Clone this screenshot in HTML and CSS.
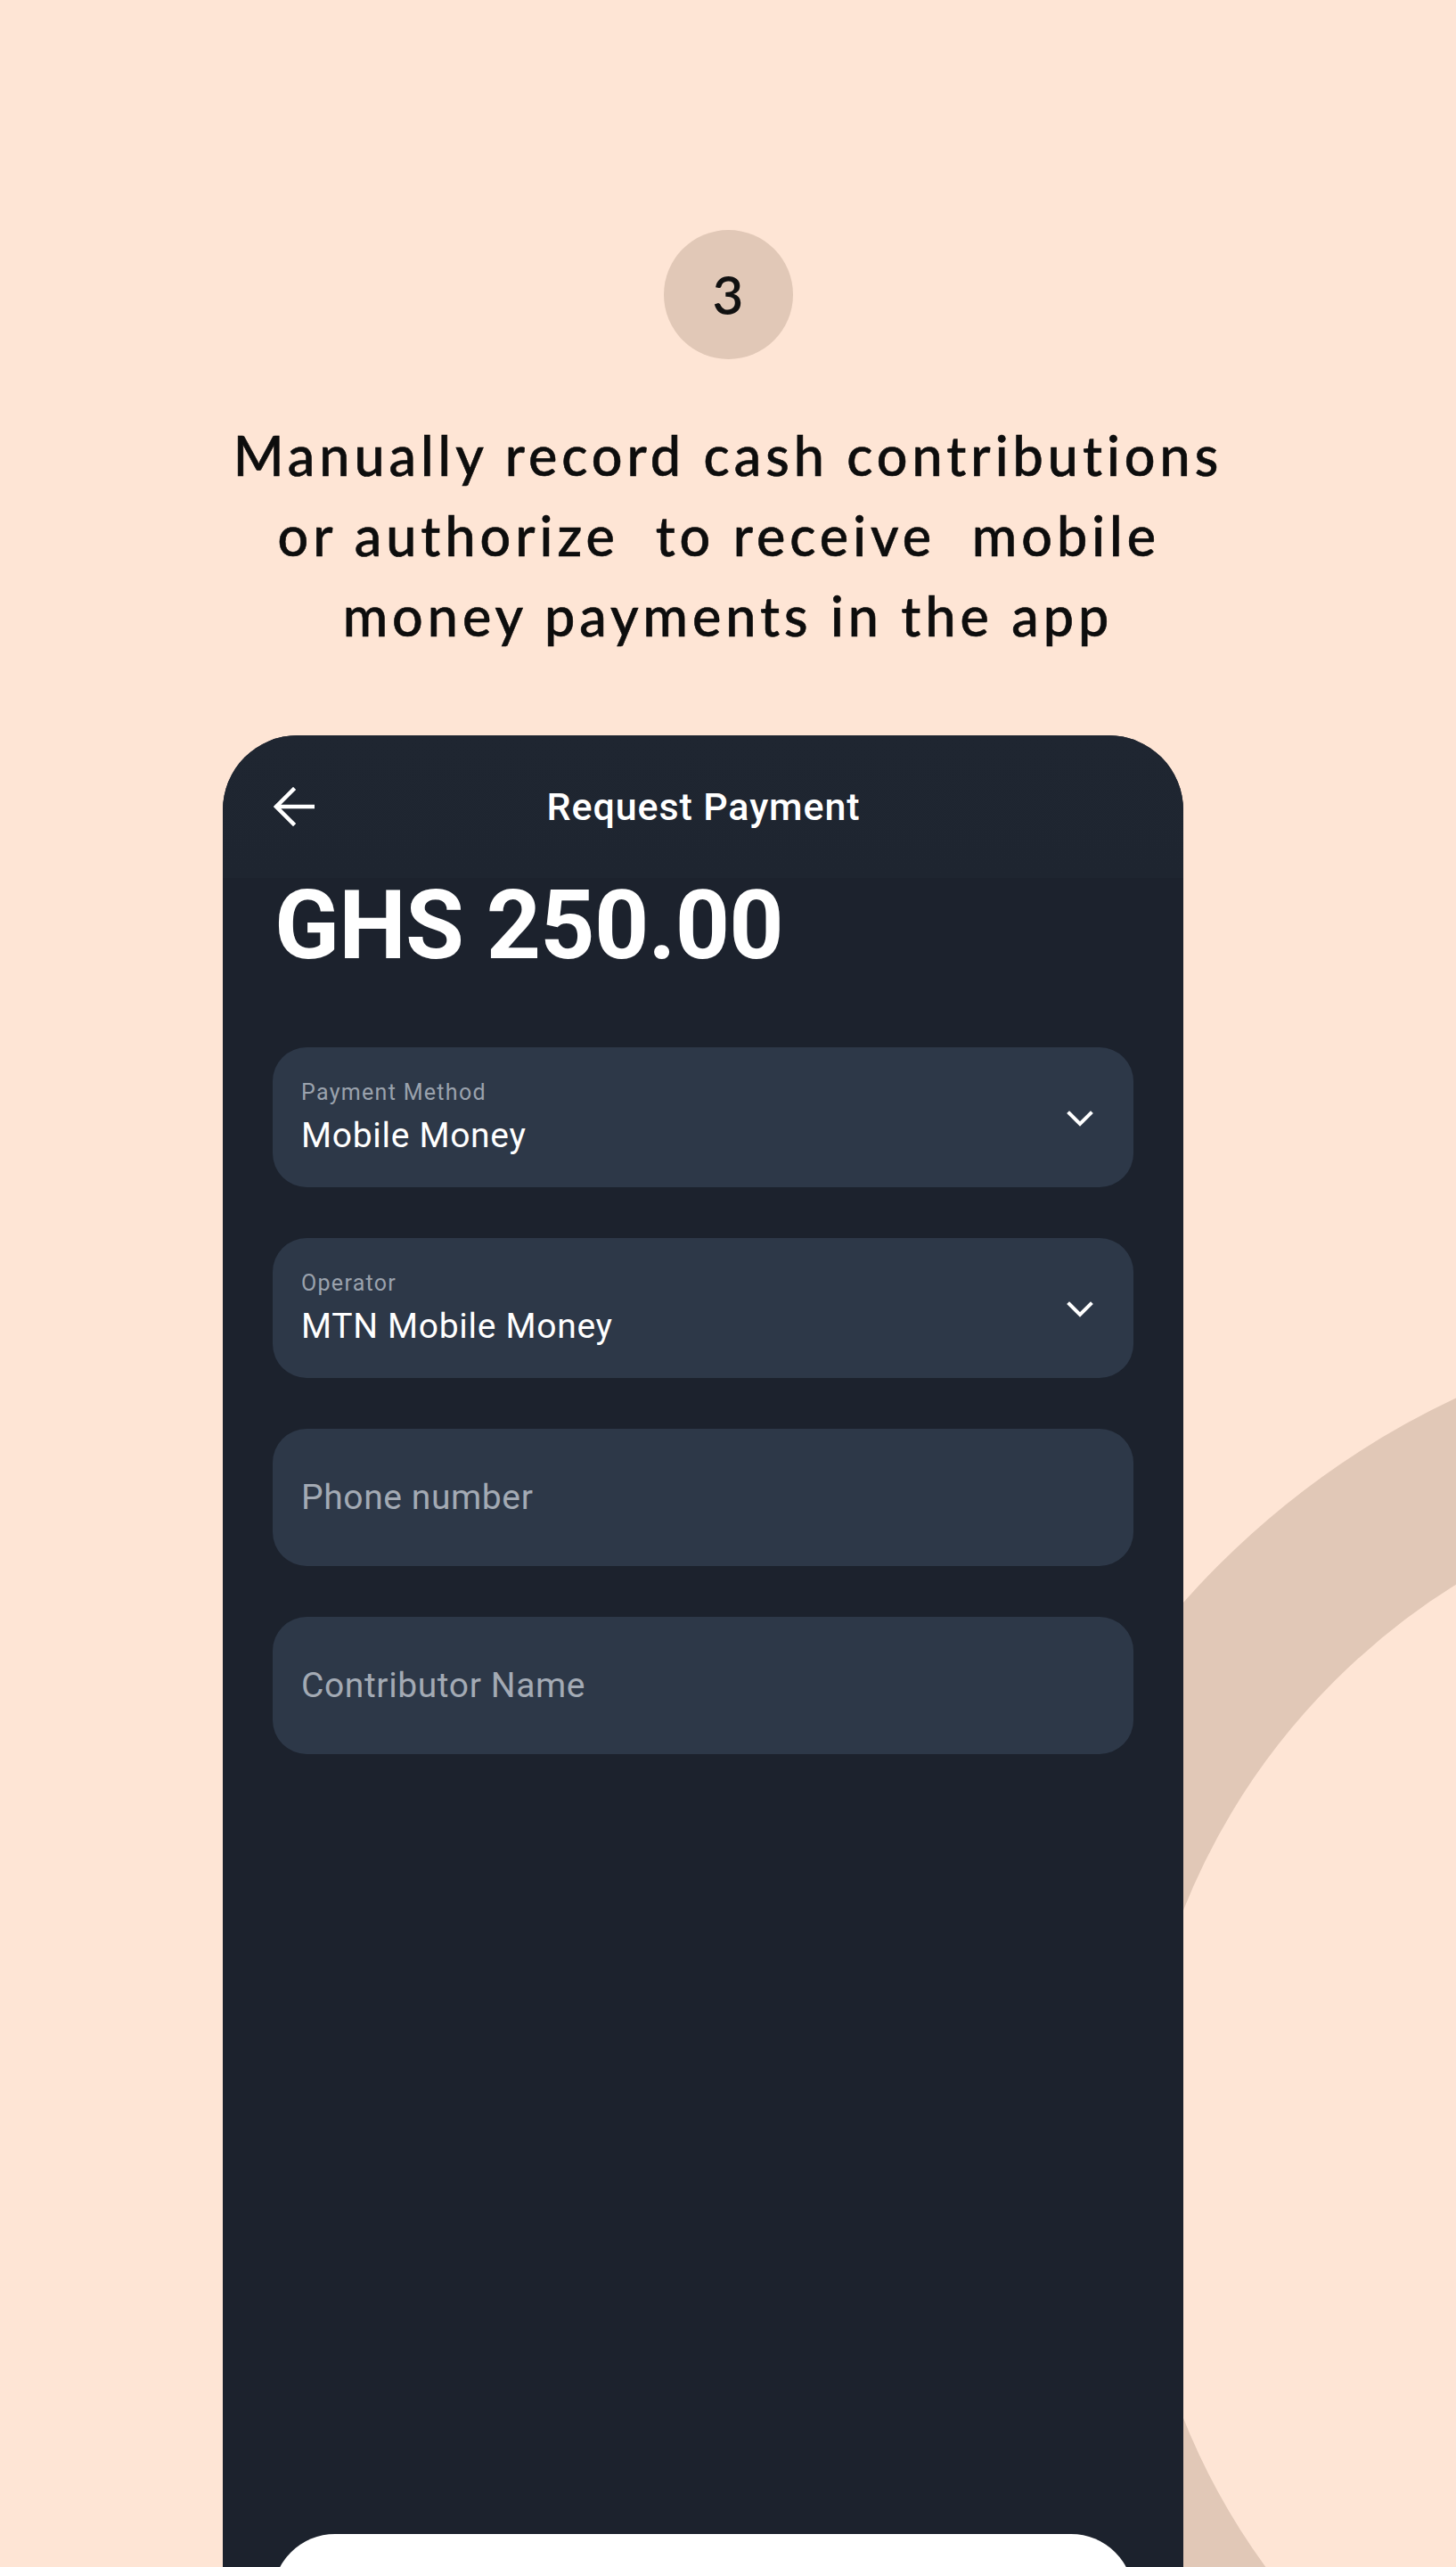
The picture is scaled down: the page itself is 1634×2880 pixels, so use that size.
FILE: index.html
```html
<!DOCTYPE html>
<html lang="en">
<head>
<meta charset="utf-8">
<title>Request Payment</title>
<link rel="stylesheet" href="styles.css">
</head>
<body>
<div class="ring" aria-hidden="true"></div>
<main class="page">
  <div class="step">3</div>
  <h1 class="headline">Manually record cash contributions<br>or authorize&nbsp; to receive&nbsp; mobile&nbsp;<br>money payments in the app</h1>

  <section class="phone">
    <header class="bar">
      <svg class="back" width="46" height="44" viewBox="0 0 46 44" aria-hidden="true">
        <path d="M44 22H4M22 3L3 22L22 41" fill="none" stroke="#ffffff" stroke-width="4.5" stroke-linecap="square" stroke-linejoin="miter"/>
      </svg>
      <div class="bar-title">Request Payment</div>
      <span class="bar-spacer"></span>
    </header>

    <div class="amount">GHS 250.00</div>

    <div class="fields">
      <div class="field select">
        <div class="field-text">
          <div class="field-label">Payment Method</div>
          <div class="field-value">Mobile Money</div>
        </div>
        <svg class="chev" width="30" height="18" viewBox="0 0 30 18" aria-hidden="true">
          <path d="M3 3L15 15L27 3" fill="none" stroke="#ffffff" stroke-width="4" stroke-linecap="square"/>
        </svg>
      </div>
      <div class="field select">
        <div class="field-text">
          <div class="field-label">Operator</div>
          <div class="field-value">MTN Mobile Money</div>
        </div>
        <svg class="chev" width="30" height="18" viewBox="0 0 30 18" aria-hidden="true">
          <path d="M3 3L15 15L27 3" fill="none" stroke="#ffffff" stroke-width="4" stroke-linecap="square"/>
        </svg>
      </div>
      <div class="field input">
        <span class="placeholder">Phone number</span>
      </div>
      <div class="field input">
        <span class="placeholder">Contributor Name</span>
      </div>
    </div>

    <div class="cta" role="button" aria-label="Continue"></div>
  </section>
</main>
</body>
</html>
```

FILE: styles.css
```css
* { box-sizing: border-box; }

html, body {
  margin: 0;
  padding: 0;
}

body {
  background: #fee5d5;
  height: 2880px;
  overflow: hidden;
  position: relative;
  font-family: "Lato", "Noto Sans", sans-serif;
}

.ring {
  position: absolute;
  left: 1089px;
  top: 1478px;
  width: 1900px;
  height: 1900px;
  border-radius: 50%;
  border: 184px solid #e1c8b7;
  z-index: 0;
}

.page {
  position: relative;
  z-index: 1;
  display: flex;
  flex-direction: column;
  align-items: center;
  padding-top: 258px;
}

.step {
  width: 145px;
  height: 145px;
  border-radius: 50%;
  background: #e1c8b7;
  color: #111111;
  display: flex;
  align-items: center;
  justify-content: center;
  font-size: 60px;
  font-weight: 600;
  line-height: 1;
  padding-bottom: 2px;
}

.headline {
  margin: 63px 0 0;
  font-size: 61px;
  font-weight: 500;
  line-height: 90px;
  text-align: center;
  color: #0d0d0d;
  letter-spacing: 5px;
  -webkit-text-stroke: 0.6px #0d0d0d;
}

.phone {
  align-self: flex-start;
  margin-left: 250px;
  margin-top: 89px;
  width: 1078px;
  background: #1c222d;
  border-radius: 84px 84px 0 0;
  overflow: hidden;
  font-family: "Roboto", "Noto Sans", sans-serif;
  color: #ffffff;
  padding-bottom: 200px;
}

.bar {
  height: 160px;
  background: linear-gradient(#1f2631, #1e2530);
  display: flex;
  align-items: center;
  justify-content: space-between;
  padding: 0 56px 0 57px;
}

.back { display: block; }

.bar-title {
  font-size: 43px;
  font-weight: 500;
  letter-spacing: 0.9px;
}

.bar-spacer { width: 46px; }

.amount {
  padding: 0 56px 0 58px;
  font-size: 107px;
  font-weight: 700;
  line-height: 107px;
  letter-spacing: -0.8px;
}

.fields {
  margin: 83px 56px 0;
  display: flex;
  flex-direction: column;
  gap: 57px;
}

.field {
  background: #2d3848;
  border-radius: 38px;
  display: flex;
  align-items: center;
  padding: 0 45px 0 32px;
}

.field.select {
  height: 157px;
  align-items: flex-start;
  justify-content: space-between;
}

.field.input {
  height: 154px;
}

.field-text {
  padding-top: 36px;
}

.field-label {
  font-size: 25px;
  line-height: 30px;
  color: #9aa2ad;
  letter-spacing: 1.3px;
}

.field-value {
  margin-top: 10px;
  font-size: 39px;
  line-height: 46px;
  color: #ffffff;
  letter-spacing: 0.7px;
}

.chev {
  display: block;
  margin-top: 71px;
}

.placeholder {
  font-size: 39px;
  color: #a3aab4;
  letter-spacing: 0.6px;
}

.cta {
  margin: 875px 56px 0;
  height: 140px;
  border-radius: 70px;
  background: #ffffff;
}
```
